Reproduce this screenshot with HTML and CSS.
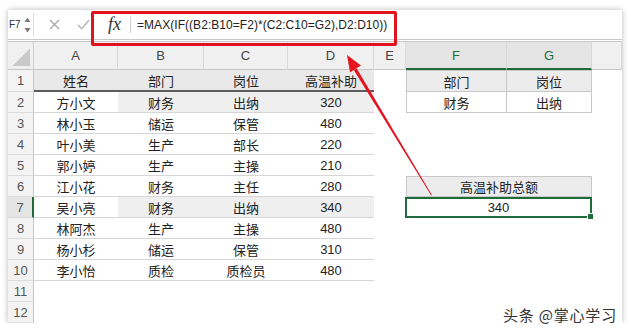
FILE: index.html
```html
<!DOCTYPE html>
<html lang="zh-CN">
<head>
    <meta charset="UTF-8">
    <meta name="viewport" content="width=device-width, initial-scale=1.0">
    <title>高温补助 - MAX IF</title>
    <link rel="stylesheet" href="styles.css">
</head>
<body>

    <div class="window">
        <div class="fbar">
            <div class="namebox">F7</div>
            <div class="spin">
                <svg width="7" height="18" viewBox="0 0 7 18"><path d="M0.5 6L3.5 1.5L6.5 6Z M0.5 12L3.5 16.5L6.5 12Z" fill="#7a7a7a"/></svg>
            </div>
            <div class="fsep"></div>
            <div class="ficon cancel">
                <svg width="11" height="11" viewBox="0 0 11 11"><path d="M1 1L10 10M10 1L1 10" stroke="#a8a8a8" stroke-width="1.4"/></svg>
            </div>
            <div class="ficon enter">
                <svg width="13" height="11" viewBox="0 0 13 11"><path d="M1 6L4.8 9.8L12 1" stroke="#b4b4b4" stroke-width="1.4" fill="none"/></svg>
            </div>
            <div class="fx">fx</div>
            <div class="fsep2"></div>
            <div class="formula">=MAX(IF((B2:B10=F2)*(C2:C10=G2),D2:D10))</div>
        </div>

        <div class="sheet">
            <div class="row head">
                <div class="corner"></div>
                <div class="ch">A</div>
                <div class="ch">B</div>
                <div class="ch">C</div>
                <div class="ch">D</div>
                <div class="ch">E</div>
                <div class="ch sel">F</div>
                <div class="ch sel">G</div>
                <div class="ch"></div>
            </div>

            <div class="row first">
                <div class="rh">1</div>
                <div class="c th">姓名</div>
                <div class="c th">部门</div>
                <div class="c th">岗位</div>
                <div class="c th">高温补助</div>
                <div class="c"></div>
                <div class="c box bl bt bg">部门</div>
                <div class="c box bt bg">岗位</div>
                <div class="c"></div>
            </div>

            <div class="row">
                <div class="rh">2</div>
                <div class="c td">方小文</div>
                <div class="c td hit">财务</div>
                <div class="c td hit">出纳</div>
                <div class="c td hit num">320</div>
                <div class="c"></div>
                <div class="c box bl">财务</div>
                <div class="c box">出纳</div>
                <div class="c"></div>
            </div>

            <div class="row">
                <div class="rh">3</div>
                <div class="c td">林小玉</div>
                <div class="c td">储运</div>
                <div class="c td">保管</div>
                <div class="c td num">480</div>
                <div class="c"></div><div class="c"></div><div class="c"></div><div class="c"></div>
            </div>

            <div class="row">
                <div class="rh">4</div>
                <div class="c td">叶小美</div>
                <div class="c td">生产</div>
                <div class="c td">部长</div>
                <div class="c td num">220</div>
                <div class="c"></div><div class="c"></div><div class="c"></div><div class="c"></div>
            </div>

            <div class="row">
                <div class="rh">5</div>
                <div class="c td">郭小婷</div>
                <div class="c td">生产</div>
                <div class="c td">主操</div>
                <div class="c td num">210</div>
                <div class="c"></div><div class="c"></div><div class="c"></div><div class="c"></div>
            </div>

            <div class="row">
                <div class="rh">6</div>
                <div class="c td">江小花</div>
                <div class="c td">财务</div>
                <div class="c td">主任</div>
                <div class="c td num">280</div>
                <div class="c"></div>
                <div class="c box bl bt bg wide">高温补助总额</div>
                <div class="c"></div>
            </div>

            <div class="row">
                <div class="rh active">7</div>
                <div class="c td">吴小亮</div>
                <div class="c td hit">财务</div>
                <div class="c td hit">出纳</div>
                <div class="c td hit num">340</div>
                <div class="c"></div>
                <div class="c wide result num">340</div>
                <div class="c"></div>
            </div>

            <div class="row">
                <div class="rh">8</div>
                <div class="c td">林阿杰</div>
                <div class="c td">生产</div>
                <div class="c td">主操</div>
                <div class="c td num">480</div>
                <div class="c"></div><div class="c"></div><div class="c"></div><div class="c"></div>
            </div>

            <div class="row">
                <div class="rh">9</div>
                <div class="c td">杨小杉</div>
                <div class="c td">储运</div>
                <div class="c td">保管</div>
                <div class="c td num">310</div>
                <div class="c"></div><div class="c"></div><div class="c"></div><div class="c"></div>
            </div>

            <div class="row">
                <div class="rh">10</div>
                <div class="c td">李小怡</div>
                <div class="c td">质检</div>
                <div class="c td">质检员</div>
                <div class="c td num">480</div>
                <div class="c"></div><div class="c"></div><div class="c"></div><div class="c"></div>
            </div>

            <div class="row">
                <div class="rh">11</div>
                <div class="c"></div><div class="c"></div><div class="c"></div><div class="c"></div>
                <div class="c"></div><div class="c"></div><div class="c"></div><div class="c"></div>
            </div>

            <div class="row">
                <div class="rh">12</div>
                <div class="c"></div><div class="c"></div><div class="c"></div><div class="c"></div>
                <div class="c"></div><div class="c"></div><div class="c"></div><div class="c"></div>
            </div>
        </div>

        <!-- red annotation around the formula -->
        <div class="mark"></div>
    </div>

    <!-- arrow from the result cell to the formula -->
    <svg class="arrow" width="631" height="333" viewBox="0 0 631 333">
        <polygon points="356.6,68.2 353.8,69.9 431.2,195.4 431.9,195" fill="#e3141d"/>
        <polygon points="347,55 361,65.4 350,72.2" fill="#e3141d"/>
    </svg>

    <div class="watermark">头条 @掌心学习</div>

</body>
</html>
```

FILE: styles.css
```css
body {
    margin: 0;
    padding: 10px 0 0 8px;
    background-color: #ffffff;
    font-family: 'Liberation Sans', 'Noto Sans CJK SC', sans-serif;
    color: #222;
}

.window {
    position: relative;
    width: 614px;
    height: 313px;
    background-color: #fff;
    box-shadow: 0 0 6px rgba(0, 0, 0, 0.28);
    overflow: hidden;
}

/* formula bar */
.fbar {
    box-sizing: border-box;
    height: 32px;
    display: flex;
    align-items: center;
    border-bottom: 3px double #c9c9c9;
}

.namebox {
    width: 13px;
    padding-left: 1px;
    font-size: 10px;
    color: #333;
    white-space: nowrap;
}

.spin {
    width: 10px;
    display: flex;
    justify-content: center;
}

.spin svg {
    display: block;
}

.fsep {
    width: 1px;
    height: 24px;
    margin-left: 1px;
    background-color: #e0e0e0;
}

.ficon {
    width: 29px;
    display: flex;
    justify-content: center;
}

.ficon svg {
    display: block;
}

.cancel {
    margin-left: 6px;
}

.fx {
    margin-left: 10px;
    font-family: 'Liberation Serif', serif;
    font-style: italic;
    font-size: 18px;
    color: #333;
    width: 22px;
}

.fsep2 {
    width: 1px;
    height: 16px;
    background-color: #cfcfcf;
}

.formula {
    margin-left: 6px;
    font-size: 12px;
    letter-spacing: 0.05px;
    color: #222;
    white-space: nowrap;
}

/* grid */
.row {
    display: grid;
    grid-template-columns: 26px 84px 86px 84px 86px 32px 101px 85px 30px;
    height: 21px;
}

.row.head {
    height: 28px;
    background-color: #f0f0f0;
}

.row.first {
    height: 22px;
}

.row > div {
    box-sizing: border-box;
    display: flex;
    align-items: center;
    justify-content: center;
    font-size: 13px;
    white-space: nowrap;
}

.corner {
    position: relative;
    border-right: 1px solid #d0d0d0;
    border-bottom: 1px solid #c6c6c6;
}

.corner::after {
    content: '';
    position: absolute;
    right: 3px;
    bottom: 3px;
    width: 17px;
    height: 17px;
    background: linear-gradient(to bottom right, transparent 50%, #c9c9c9 50%);
}

.ch {
    font-size: 14px;
    color: #444;
    border-right: 1px solid #d9d9d9;
    border-bottom: 1px solid #c6c6c6;
}

.ch.sel {
    background-color: #e4e4e4;
    color: #1f6b3c;
    border-bottom: 2px solid #1f6b3c;
}

.rh {
    background-color: #f3f3f3;
    color: #555;
    border-right: 1px solid #c6c6c6;
    border-bottom: 1px solid #dcdcdc;
}

.rh.active {
    background-color: #e4e4e4;
    border-right: 2px solid #1f6b3c;
}

.c {
    color: #222;
}

.th {
    background-color: #e9e9e9;
    border-bottom: 2px solid #5c5c5c;
}

.td {
    border-bottom: 1px solid #d6d6d6;
}

.hit {
    background-color: #efefef;
}

.num {
    font-family: 'Liberation Sans', sans-serif;
}

/* small tables on the right */
.box {
    border-right: 1px solid #c8c8c8;
    border-bottom: 1px solid #c8c8c8;
}

.bl {
    border-left: 1px solid #c8c8c8;
}

.bt {
    border-top: 1px solid #c8c8c8;
}

.bg {
    background-color: #ececec;
}

.wide {
    grid-column: span 2;
}

.result {
    position: relative;
    border: 2px solid #1f6b3c;
    margin-left: -1px;
}

.result::after {
    content: '';
    position: absolute;
    right: -4px;
    bottom: -4px;
    width: 5px;
    height: 5px;
    background-color: #1f6b3c;
    border: 1px solid #fff;
}

.mark {
    position: absolute;
    left: 83px;
    top: 1px;
    width: 306px;
    height: 35px;
    box-sizing: border-box;
    border: 3px solid #e0121d;
    border-radius: 2px;
}

.arrow {
    position: absolute;
    left: 0;
    top: 0;
}

.watermark {
    position: absolute;
    left: 503px;
    top: 304px;
    font-family: 'Noto Sans CJK SC', sans-serif;
    font-size: 15px;
    color: #333;
    text-shadow: 0 0 2px #fff, 0 0 2px #fff, 0 0 3px #fff;
    letter-spacing: 0.8px;
}
```
